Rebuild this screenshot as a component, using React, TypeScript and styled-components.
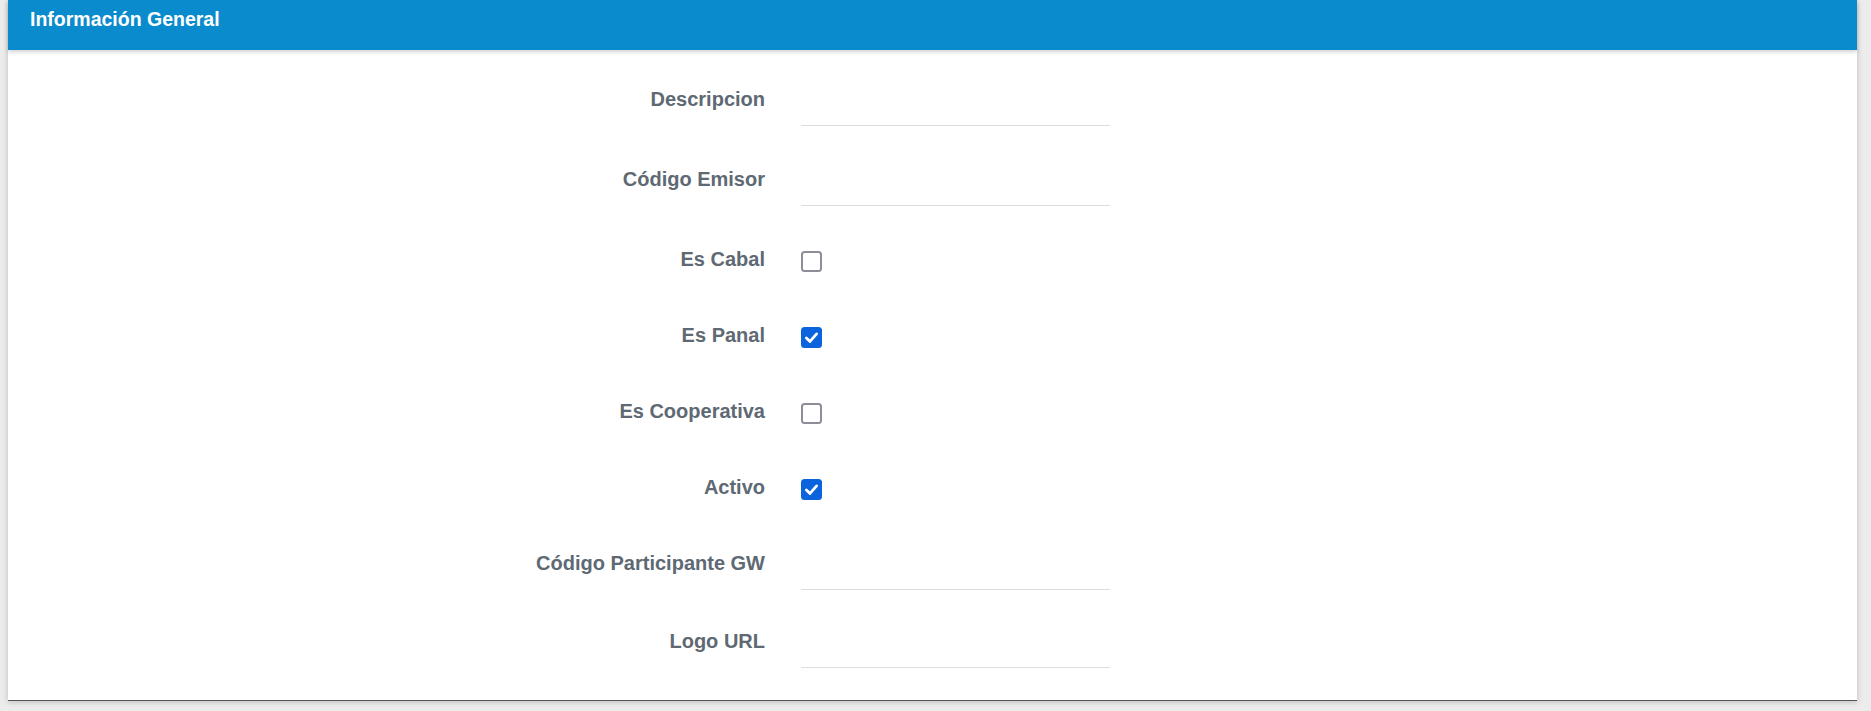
import React from "react";
import styled, { createGlobalStyle } from "styled-components";

const GlobalStyle = createGlobalStyle`
  html, body {
    margin: 0;
    padding: 0;
    background: #ececec;
    font-family: "Liberation Sans", Arial, Helvetica, sans-serif;
  }
  * { box-sizing: border-box; }
`;

const Page = styled.div`
  padding: 0 14px 10px 8px;
`;

const Card = styled.section`
  background: #ffffff;
  box-shadow: 0 1px 6px rgba(0, 0, 0, 0.2);
  border-bottom: 1px solid #545454;
`;

const CardHeader = styled.header`
  position: relative;
  z-index: 1;
  height: 50px;
  padding: 7px 22px 0;
  background: #0a8bcd;
  box-shadow: 0 2px 4px rgba(0, 0, 0, 0.18);
`;

const Title = styled.h2`
  margin: 0;
  font-size: 19.5px;
  line-height: 24px;
  font-weight: 700;
  color: #ffffff;
`;

const Body = styled.div`
  padding: 22px 0 6px;
`;

const FormRow = styled.div<{ $h: number }>`
  display: grid;
  grid-template-columns: 757px 309px;
  column-gap: 36px;
  align-items: start;
  height: ${(p) => p.$h}px;
`;

const Label = styled.label`
  padding-top: 15px;
  text-align: right;
  font-size: 20px;
  line-height: 24px;
  font-weight: 700;
  color: #5e6973;
`;

const TextField = styled.input`
  display: block;
  width: 100%;
  height: 54px;
  padding: 0;
  border: none;
  border-bottom: 1px solid #dcdfe1;
  background: transparent;
  outline: none;
  font-family: inherit;
  font-size: 18px;
  color: #333;
`;

const Box = styled.span<{ $checked: boolean }>`
  display: flex;
  align-items: center;
  justify-content: center;
  width: 21px;
  height: 21px;
  margin-top: 19px;
  border-radius: 3.5px;
  border: ${(p) => (p.$checked ? "none" : "2.5px solid #8e8e9a")};
  background: ${(p) => (p.$checked ? "#0b63de" : "#ffffff")};
`;

type Field =
  | { label: string; kind: "text"; h: number }
  | { label: string; kind: "check"; checked: boolean; h: number };

const fields: Field[] = [
  { label: "Descripcion", kind: "text", h: 80 },
  { label: "Código Emisor", kind: "text", h: 80 },
  { label: "Es Cabal", kind: "check", checked: false, h: 76 },
  { label: "Es Panal", kind: "check", checked: true, h: 76 },
  { label: "Es Cooperativa", kind: "check", checked: false, h: 76 },
  { label: "Activo", kind: "check", checked: true, h: 76 },
  { label: "Código Participante GW", kind: "text", h: 78 },
  { label: "Logo URL", kind: "text", h: 80 },
];

function CheckBox({ checked }: { checked: boolean }) {
  return (
    <Box $checked={checked} role="checkbox" aria-checked={checked}>
      {checked && (
        <svg width="21" height="21" viewBox="0 0 21 21">
          <polyline
            points="5.4,10.9 9,14.4 15.6,6.9"
            fill="none"
            stroke="#ffffff"
            strokeWidth="2.8"
            strokeLinecap="round"
            strokeLinejoin="round"
          />
        </svg>
      )}
    </Box>
  );
}

export default function App() {
  return (
    <>
      <GlobalStyle />
      <Page>
        <Card>
          <CardHeader>
            <Title>Información General</Title>
          </CardHeader>
          <Body>
            {fields.map((f) => (
              <FormRow key={f.label} $h={f.h}>
                <Label>{f.label}</Label>
                {f.kind === "text" ? (
                  <TextField type="text" aria-label={f.label} />
                ) : (
                  <CheckBox checked={f.checked} />
                )}
              </FormRow>
            ))}
          </Body>
        </Card>
      </Page>
    </>
  );
}
